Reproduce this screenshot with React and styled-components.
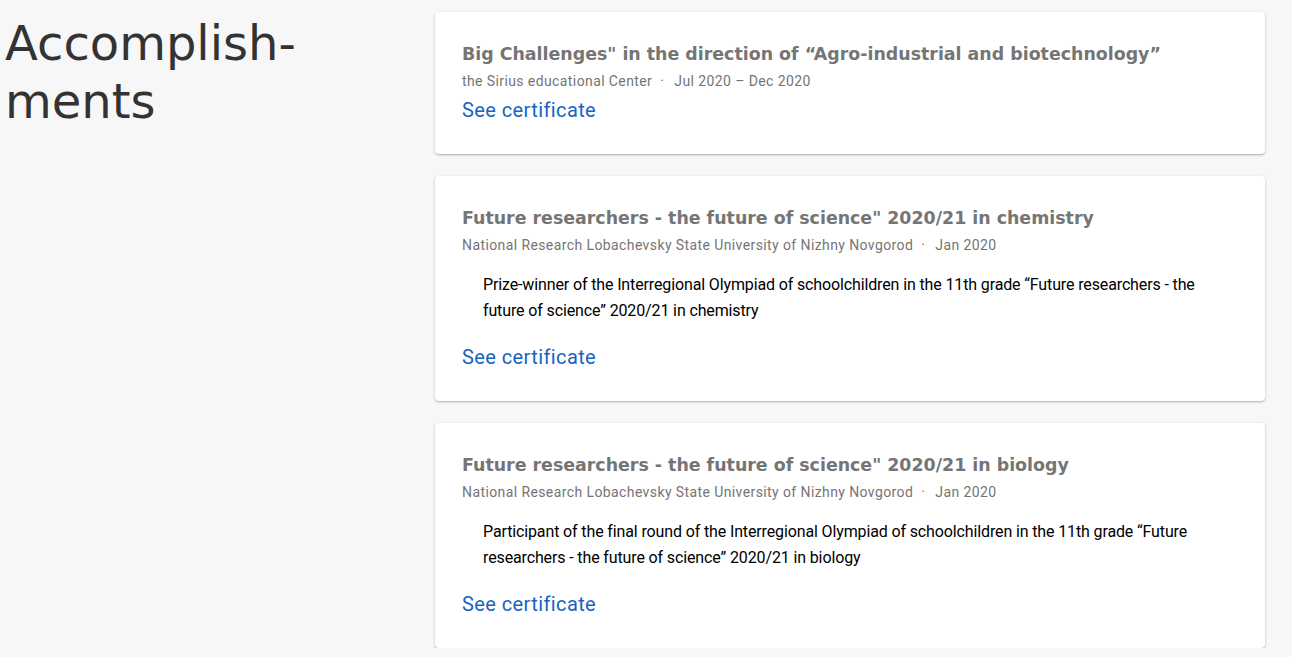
import styled, { createGlobalStyle } from "styled-components"

const GlobalStyle = createGlobalStyle`
  html, body {
    margin: 0;
    padding: 0;
    background: #f7f7f7;
  }
  body {
    font-family: Roboto, "Liberation Sans", sans-serif;
  }
`

const items = [
  {
    title: "Big Challenges\" in the direction of “Agro-industrial and biotechnology”",
    org: "the Sirius educational Center",
    date: "Jul 2020 – Dec 2020",
  },
  {
    title: "Future researchers - the future of science\" 2020/21 in chemistry",
    org: "National Research Lobachevsky State University of Nizhny Novgorod",
    date: "Jan 2020",
    text: "Prize-winner of the Interregional Olympiad of schoolchildren in the 11th grade “Future researchers - the future of science” 2020/21 in chemistry",
  },
  {
    title: "Future researchers - the future of science\" 2020/21 in biology",
    org: "National Research Lobachevsky State University of Nizhny Novgorod",
    date: "Jan 2020",
    text: "Participant of the final round of the Interregional Olympiad of schoolchildren in the 11th grade “Future researchers - the future of science” 2020/21 in biology",
  },
]

function App() {
  return (
    <>
      <GlobalStyle />
      <Section>
        <Heading>Accomplish-<br />ments</Heading>
        <List>
          {items.map((item, i) => (
            <Card key={i}>
              <Title>{item.title}</Title>
              <Meta>
                {item.org}
                <Dot>·</Dot>
                {item.date}
              </Meta>
              {item.text && <Text>{item.text}</Text>}
              <Link href="#">See certificate</Link>
            </Card>
          ))}
        </List>
      </Section>
    </>
  )
}

const Section = styled.section`
  display: grid;
  grid-template-columns: 430px 830px;
  padding: 12px 0 0 5px;
`

const Heading = styled.h1`
  margin: 0;
  padding-top: 2px;
  font-family: "DejaVu Sans", sans-serif;
  font-weight: 400;
  font-size: 48px;
  line-height: 58px;
  color: #333;
`

const List = styled.div`
  display: flex;
  flex-direction: column;
  gap: 22px;
`

const Card = styled.div`
  display: flex;
  flex-direction: column;
  align-items: flex-start;
  background: #fff;
  border-radius: 4px;
  box-shadow: 0 1px 3px rgba(0, 0, 0, 0.2), 0 1px 1px rgba(0, 0, 0, 0.12);
  padding: 28px 26px 30px 27px;
`

const Title = styled.h3`
  margin: 0;
  font-family: "DejaVu Sans", sans-serif;
  font-weight: 700;
  font-size: 17.4px;
  line-height: 29px;
  color: #757575;
`

const Meta = styled.div`
  margin-top: 2px;
  font-size: 14px;
  line-height: 20px;
  color: #757575;
  letter-spacing: 0.4px;
`

const Dot = styled.span`
  margin: 0 10px 0 8px;
`

const Text = styled.p`
  margin: 17px 0 14px;
  padding: 0 21px;
  font-size: 16px;
  line-height: 26px;
  color: #000;
  letter-spacing: -0.13px;
`

const Link = styled.a`
  margin-top: 5px;
  font-size: 20px;
  line-height: 28px;
  letter-spacing: 0.4px;
  color: #1565c0;
  text-decoration: none;
`

export default App
